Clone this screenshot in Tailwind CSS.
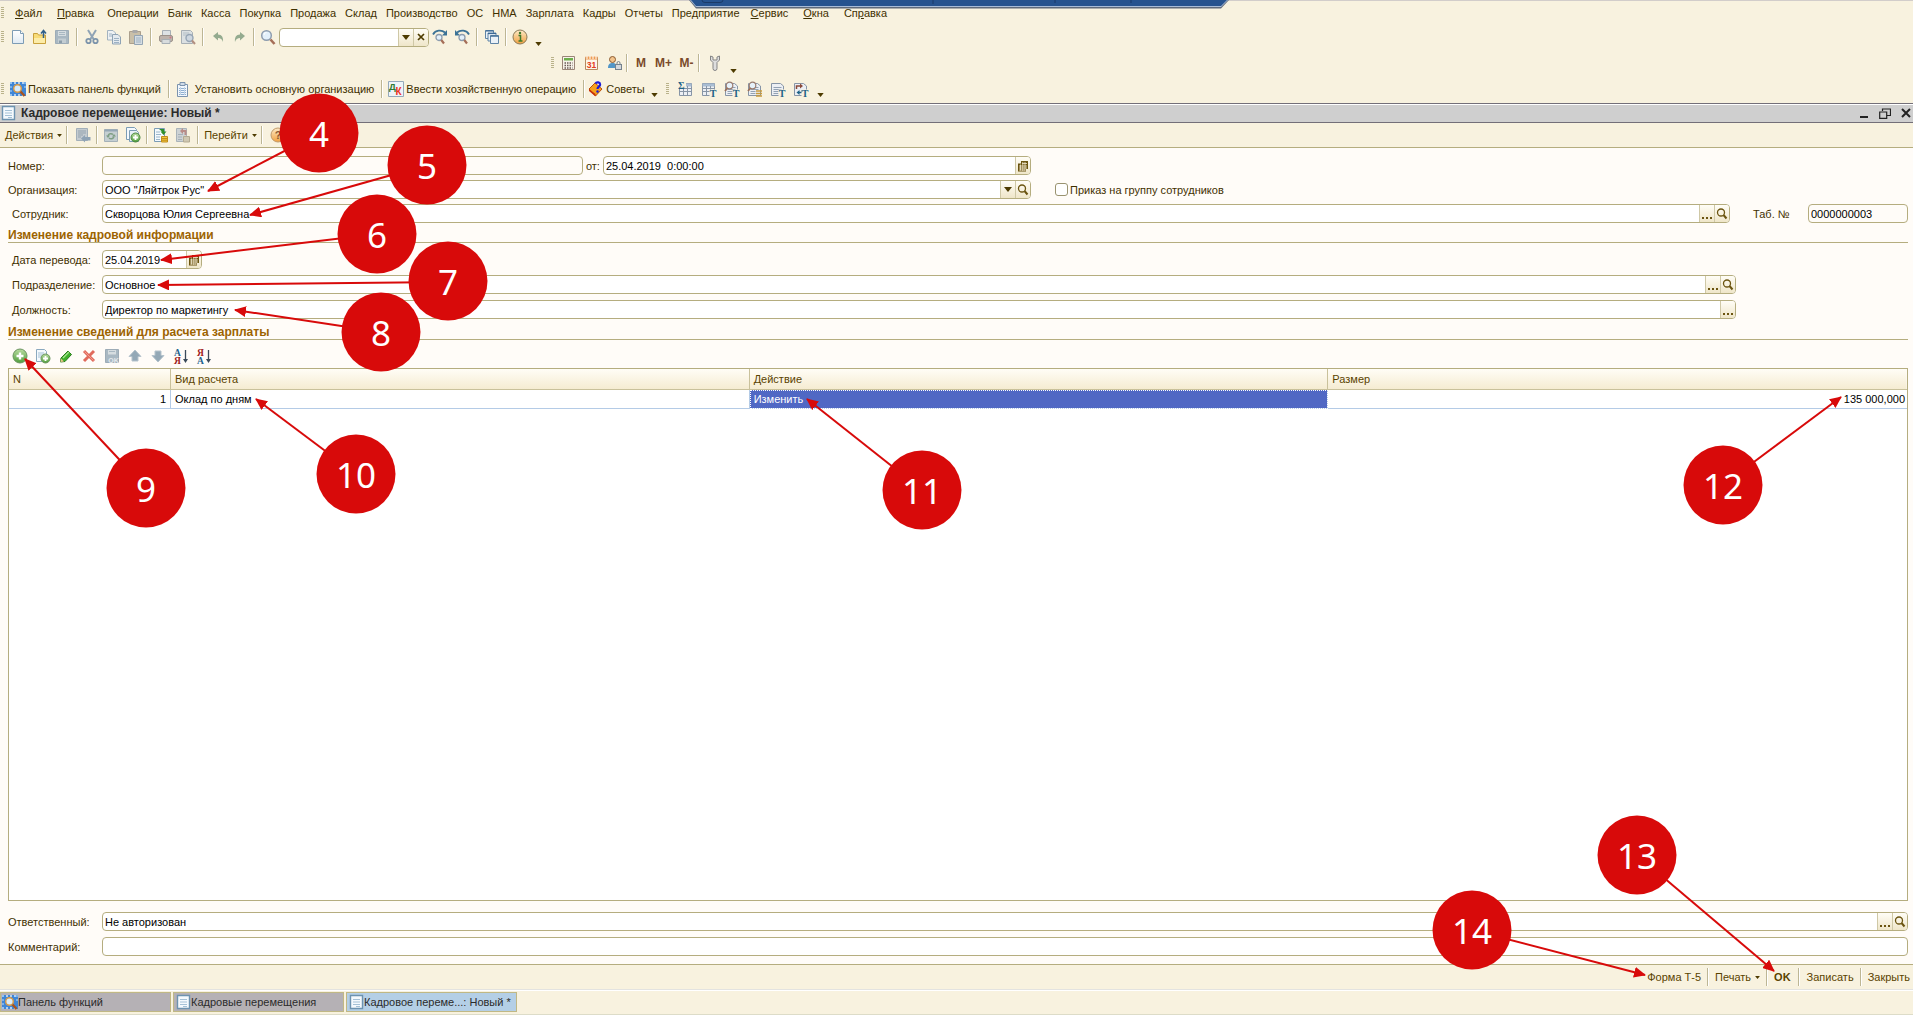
<!DOCTYPE html>
<html lang="ru">
<head>
<meta charset="utf-8">
<meta name="viewport" content="width=device-width, initial-scale=1">
<title>Кадровое перемещение: Новый</title>
<script src="https://cdn.jsdelivr.net/npm/@tailwindcss/browser@4"></script>
</head>
<body class="relative flex min-h-screen flex-col overflow-x-hidden bg-[#f8f2df] font-['Liberation_Sans',Arial,sans-serif] text-[11px] leading-[14px] text-[#3f3000]">

<svg class="absolute size-0" aria-hidden="true">
  <defs>
    <linearGradient id="g-doc" x1="0" y1="0" x2="0" y2="1"><stop offset="0" stop-color="#fff"/><stop offset="1" stop-color="#dfeaf3"/></linearGradient>
    <linearGradient id="g-or" x1="0" y1="0" x2="0" y2="1"><stop offset="0" stop-color="#fdeac8"/><stop offset="1" stop-color="#f0a040"/></linearGradient>
    <linearGradient id="g-gr" x1="0" y1="0" x2="0" y2="1"><stop offset="0" stop-color="#b9dca0"/><stop offset="1" stop-color="#4f9e3c"/></linearGradient>
    <symbol id="i-new" viewBox="0 0 16 16"><path d="M2.5 1.5h8l3 3v10h-11z" fill="url(#g-doc)" stroke="#7d9cb5"/><path d="M10.500 1.500v3h3" fill="#fff" stroke="#7d9cb5"/></symbol>
    <symbol id="i-open" viewBox="0 0 16 16"><path d="M1.500 4.500h4l1 1.500h7v8.500h-12z" fill="#f8dc78" stroke="#c9a13c"/><path d="M2 9h11v5H2z" fill="#fcecA8"/><path d="M11.500 9V2.500M9 4.500l2.500-3 2.500 3" fill="none" stroke="#2f5f8a" stroke-width="1.500"/></symbol>
    <symbol id="i-save" viewBox="0 0 16 16"><path d="M1.500 1.500h13v13h-13z" fill="#a9b8c2" stroke="#9dacb7"/><path d="M4 2h8v5H4z" fill="#d6dde0"/><path d="M4 9.500h8V14H4z" fill="#c3cdd2"/><path d="M5 11.500h3v2.500H5z" fill="#8d9eaa"/><path d="M5 3.500h6M5 5.500h6" stroke="#a9b8c2"/></symbol>
    <symbol id="i-saveok" viewBox="0 0 16 16"><path d="M1.500 1.500h13v13h-13z" fill="#a9b8c2" stroke="#9dacb7"/><path d="M4 2h8v4.500H4z" fill="#d6dde0"/><path d="M5 3.500h6" stroke="#a9b8c2"/><text x="9.500" y="14.500" font-size="7" font-weight="700" text-anchor="middle" fill="#e4e9ec">OK</text></symbol>
    <symbol id="i-cut" viewBox="0 0 16 16"><path d="M4 1l5.500 9M12 1L6.500 10" fill="none" stroke="#8fa3b5" stroke-width="2"/><circle cx="4.500" cy="12" r="2.200" fill="none" stroke="#7c94ab" stroke-width="1.800"/><circle cx="11.500" cy="12" r="2.200" fill="none" stroke="#7c94ab" stroke-width="1.800"/></symbol>
    <symbol id="i-copy" viewBox="0 0 16 16"><path d="M1.500 1.500h5.500l2.500 2.500v7h-8z" fill="#eef1f3" stroke="#a3b3c0"/><path d="M6.500 5.500H12l2.500 2.500v7h-8z" fill="#e4eaef" stroke="#8fa3b5"/><path d="M8 9.500h5M8 11.500h5M8 13.500h5M3 5h3M3 7h3" stroke="#9db2c4"/></symbol>
    <symbol id="i-paste" viewBox="0 0 16 16"><path d="M1.500 2.500h11v12h-11z" fill="#c9bfa8" stroke="#ab9f8c"/><path d="M4.500 1h5v3h-5z" fill="#a9a9a9"/><path d="M6.500 6.500h8v9h-8z" fill="#d6dde2" stroke="#94a5b4"/><path d="M8 9h5M8 11h5M8 13h5" stroke="#9db2c4"/></symbol>
    <symbol id="i-print" viewBox="0 0 16 16"><path d="M4.500 1.500h8v5h-8z" fill="#dde2e4" stroke="#a7afb5"/><rect x="1.500" y="6.500" width="13" height="6" rx="1.500" fill="#bdb3ab" stroke="#9c928a"/><path d="M4 10.500h8v4H4z" fill="#d8dcdd" stroke="#a7afb5"/><circle cx="12.500" cy="8.500" r="1" fill="#c78"/></symbol>
    <symbol id="i-prev" viewBox="0 0 16 16"><path d="M1.500 1.500h9l2 2v11h-11z" fill="#dbe0e2" stroke="#a7afb5"/><path d="M3 4h6M3 6h4" stroke="#b3bec6"/><circle cx="9.500" cy="9" r="3.500" fill="#cdd6df" stroke="#96a5b5" stroke-width="1.400"/><path d="M12 11.500l3 3.500" stroke="#b28f80" stroke-width="2"/></symbol>
    <symbol id="i-undo" viewBox="0 0 16 16"><path d="M3 7l5-4v2.500c4 0 5.500 3 5 7.500C12 10 10.500 9 8 9v2.500z" fill="#94ab8f"/></symbol>
    <symbol id="i-redo" viewBox="0 0 16 16"><path d="M13 7L8 3v2.500c-4 0-5.500 3-5 7.500C4 10 5.500 9 8 9v2.500z" fill="#94ab8f"/></symbol>
    <symbol id="i-mag" viewBox="0 0 16 16"><circle cx="6.500" cy="6.500" r="4.800" fill="#e3f0fa" stroke="#8d9cae" stroke-width="1.500"/><path d="M4 6a2.500 2.500 0 0 1 2.500-2.500" stroke="#fff" fill="none"/><path d="M10.500 10.500l4 4.500" stroke="#a56e58" stroke-width="2.600"/></symbol>
    <symbol id="i-magf" viewBox="0 0 16 16"><path d="M1 5.500C3.500 1 9.500.5 13 3.500" fill="none" stroke="#3b7296" stroke-width="1.800"/><path d="M15 1v5.500h-5z" fill="#3b7296"/><circle cx="7" cy="8.500" r="3" fill="#e3f0fa" stroke="#8d9cae" stroke-width="1.300"/><path d="M9.300 11l2.700 3.500" stroke="#a56e58" stroke-width="2.200"/></symbol>
    <symbol id="i-magb" viewBox="0 0 16 16"><path d="M15 5.500C12.500 1 6.500.5 3 3.500" fill="none" stroke="#3b7296" stroke-width="1.800"/><path d="M1 1v5.500h5z" fill="#3b7296"/><circle cx="8" cy="8.500" r="3" fill="#e3f0fa" stroke="#8d9cae" stroke-width="1.300"/><path d="M10.300 11l2.700 3.500" stroke="#a56e58" stroke-width="2.200"/></symbol>
    <symbol id="i-wins" viewBox="0 0 16 16"><g fill="#eaf1f7" stroke="#5f84a6"><path d="M1.500 1.500h8v8h-8z"/><path d="M4 4h8v8H4z"/><path d="M6.500 6.500h8v8h-8z"/></g><path d="M6.500 7.200h8M4 4.600h8M1.500 2h8" stroke="#31618f"/></symbol>
    <symbol id="i-info" viewBox="0 0 16 16"><circle cx="8" cy="8" r="7" fill="url(#g-or)" stroke="#8c7a55"/><path d="M6.500 6.500H8.500V12M6.500 12h4" stroke="#3f7a2a" stroke-width="1.500" fill="none"/><circle cx="8" cy="4" r="1.200" fill="#3f7a2a"/></symbol>
    <symbol id="i-calc" viewBox="0 0 16 16"><path d="M1.500 1.500h12v13h-12z" fill="#f7f3ea" stroke="#9a8577"/><path d="M3 3h9v2.500H3z" fill="#6cae4c"/><path d="M3.500 8h8M3.500 10.500h8M3.500 13h8" stroke="#6b5a55" stroke-width="1.500" stroke-dasharray="1.500 1"/></symbol>
    <symbol id="i-cal" viewBox="0 0 16 16"><path d="M1.500 2.500h12v12h-12z" fill="#fff6ea" stroke="#b58a62"/><path d="M1.500 1.500h12v3h-12z" fill="#ee9d52"/><path d="M3 1v3M6 1v3M9 1v3M12 1v3" stroke="#fff"/><text x="7.500" y="13" font-size="8.500" font-weight="700" text-anchor="middle" fill="#e23a22">31</text></symbol>
    <symbol id="i-user" viewBox="0 0 16 16"><circle cx="5.500" cy="4.500" r="3" fill="#f3c48c" stroke="#8a5a30"/><path d="M1 13c0-4 2-5 4.500-5S10 9 10 13z" fill="#5296c8"/><rect x="8.500" y="9.500" width="6" height="5" fill="#d4d8dc" stroke="#75828e"/><path d="M10 9.500V8a1.500 1.500 0 0 1 3 0v1.500" fill="none" stroke="#75828e"/></symbol>
    <symbol id="i-wrench" viewBox="0 0 16 16"><path d="M3.500 1v4L6 7.500v6a1.800 1.800 0 0 0 4 0v-6L12.500 5V1L10 2v3H6V2z" fill="#dedede" stroke="#858585"/></symbol>
    <symbol id="i-panel" viewBox="0 0 16 16"><path d="M0 1h16v14H0z" fill="#3f86d6"/><path d="M0 2h16M0 14h16" stroke="#d7e9fa" stroke-dasharray="2 2" stroke-width="1.500"/><path d="M1 1v14M15 1v8" stroke="#8fc0f0" stroke-dasharray="2 2" stroke-width="1.500"/><circle cx="7.500" cy="7.500" r="3.800" fill="#d8ecfb" stroke="#d79a48" stroke-width="1.500"/><path d="M10.500 10.500l4 4.500" stroke="#a8541e" stroke-width="2.400"/></symbol>
    <symbol id="i-org" viewBox="0 0 16 16"><path d="M2.500 3.500h10v12h-10z" fill="#f2f7fc" stroke="#7b93ad"/><path d="M5 1.500h5v3H5z" fill="#cfdbe8" stroke="#7b93ad"/><path d="M4 7.500h7M4 9.500h7M4 11.500h7M4 13.500h7" stroke="#8fb0d2"/><path d="M5.500 6v8M9.500 6v8" stroke="#c3d5e6"/></symbol>
    <symbol id="i-dk" viewBox="0 0 16 16"><path d="M.5.500h15v15H.5z" fill="#eef4f8" stroke="#94a9bb"/><text x="1" y="9" font-size="9.500" font-weight="700" fill="#2e7a30">Д</text><text x="7.500" y="14" font-size="10" font-weight="700" fill="#ee3322">К</text></symbol>
    <symbol id="i-tips" viewBox="0 0 16 16"><path d="M1 8l6-6 7 6-6.500 7z" fill="#f6a11c" stroke="#b8500c"/><path d="M1 8l6.500 5v2.500L1 10z" fill="#c82f0a"/><path d="M7.500 2.500C8.500.500 12.500 1 12 4c-.4 1.800-2.500 1.500-2.500 4" fill="none" stroke="#1b1bd8" stroke-width="2.200"/><circle cx="9.500" cy="10.500" r="1.200" fill="#1b1bd8"/></symbol>
    <symbol id="r-doc" viewBox="0 0 16 16"><path d="M1.500 2.500h9l3 2.500v9.500h-12z" fill="#eceff4" stroke="#8795a6"/><path d="M3.500 6.500h8M3.500 8.500h8M3.500 10.500h5M3.500 12.500h5" stroke="#93a2b4"/></symbol>
    <symbol id="r-grid" viewBox="0 0 16 16"><path d="M1.500 2.500h12v12h-12z" fill="#eceff4" stroke="#8795a6"/><path d="M1.500 4h12" stroke="#a9bdd3" stroke-width="3"/><path d="M2 7.500h11M2 10.500h11M5.500 5v9M9.500 5v9" stroke="#8795a6"/></symbol>
    <symbol id="r-t" viewBox="0 0 16 16"><path d="M8.500 8.500h7v7h-7z" fill="#f8f2df"/><text x="12" y="15.500" font-family="Liberation Serif" font-size="10" font-weight="700" text-anchor="middle" fill="#1d6287">Т</text></symbol>
    <symbol id="r-mag" viewBox="0 0 16 16"><circle cx="5.500" cy="4.500" r="3.300" fill="#e6f1fa" stroke="#9a7c70" stroke-width="1.200"/><path d="M3.500 7L1 10" stroke="#9a6e58" stroke-width="1.800"/></symbol>
    <symbol id="i-doc" viewBox="0 0 16 16"><path d="M2.500 1.500h12v13h-12z" fill="#f4f9fd" stroke="#6d93b0" stroke-width="1.400"/><path d="M5 5.500h7M5 8h7M5 10.500h7M8 12.500h4" stroke="#a5c1d6"/></symbol>
    <symbol id="i-back" viewBox="0 0 16 16"><path d="M1.500 1.500h11v12h-11z" fill="#c4cbd0" stroke="#a2afb9"/><path d="M3 4h8M3 6h8M3 8h5M3 10h3" stroke="#94a3af"/><path d="M6 11.500l4-3.500v2h5.500v3.500H10v2z" fill="#8fa3b5"/></symbol>
    <symbol id="i-refr" viewBox="0 0 16 16"><path d="M1.500 2.500h13v12h-13z" fill="#c5cfd2" stroke="#a4b1b8"/><path d="M1.500 3.500h13" stroke="#94a7b5" stroke-width="2"/><path d="M5 9a3 3 0 0 1 5-1.500M11 9.500a3 3 0 0 1-5 1.500" fill="none" stroke="#7f9f85" stroke-width="1.500"/><path d="M3 8.500h4l-2 2.500zM9 9.500h4L11 7z" fill="#7f9f85"/></symbol>
    <symbol id="i-cpyadd" viewBox="0 0 16 16"><path d="M1.500.5h8l2 2v10h-10z" fill="#f4f9fd" stroke="#7b9cb5"/><path d="M4.500 3.500h7l2 2v9h-9z" fill="#e8f1f8" stroke="#7b9cb5"/><circle cx="10.500" cy="10.500" r="4.500" fill="url(#g-gr)" stroke="#4b8640"/><path d="M10.500 8v5M8 10.500h5" stroke="#fff" stroke-width="1.800"/></symbol>
    <symbol id="i-post" viewBox="0 0 16 16"><path d="M1.500 1.500h10v13h-10z" fill="#f4f9fd" stroke="#7b9cb5"/><path d="M3 5h4M3 7.500h5M3 10h4M3 12.500h4" stroke="#9bb6cb"/><path d="M6 2h5v2.500h2.500L10.500 8 7.500 4.500H9" fill="#2f8f2a"/><path d="M8.500 9.500h6v5.500h-6z" fill="#f3c83c" stroke="#c08c1c"/><path d="M8.500 11.500h6M8.500 13.200h6" stroke="#c08c1c"/></symbol>
    <symbol id="i-unpost" viewBox="0 0 16 16"><path d="M1.500 1.500h10v13h-10z" fill="#cdd2d4" stroke="#a9b3b9"/><path d="M3 7.500h5M3 10h4M3 12.500h4" stroke="#a5b0b8"/><path d="M5 4l3-3v2h3.500v5H9.500V5H8v2z" fill="#b98c88"/><path d="M8.500 9.500h6v5.500h-6z" fill="#cfc8b2" stroke="#b3aa92"/></symbol>
    <symbol id="i-help" viewBox="0 0 16 16"><circle cx="8" cy="8" r="7" fill="url(#g-or)" stroke="#c09a6a"/><text x="8" y="12" font-size="11" font-weight="700" text-anchor="middle" fill="#8a5a30">?</text></symbol>
    <symbol id="i-add" viewBox="0 0 16 16"><circle cx="8" cy="8" r="7" fill="url(#g-gr)" stroke="#6b9460"/><path d="M8 4.500v7M4.500 8h7" stroke="#fff" stroke-width="2.400"/></symbol>
    <symbol id="i-addc" viewBox="0 0 16 16"><path d="M1.500 1.500h8l2 2v10h-10z" fill="#f4f9fd" stroke="#8ba9bf"/><path d="M3 5h6M3 7h6M3 9h3" stroke="#a5c1d6"/><circle cx="10.500" cy="10.500" r="4.500" fill="url(#g-gr)" stroke="#6b9460"/><path d="M10.500 8v5M8 10.500h5" stroke="#fff" stroke-width="1.800"/></symbol>
    <symbol id="i-pen" viewBox="0 0 16 16"><path d="M3 10l7-7 3.500 3.500L7 13.500 2.500 14z" fill="#3fb02c" stroke="#2a7a1c"/><path d="M5 10l6-6" stroke="#a9e690" stroke-width="1.300"/><path d="M2.500 14l.500-3.500 3 3z" fill="#e9c58a"/></symbol>
    <symbol id="i-del" viewBox="0 0 16 16"><path d="M3 3l10 10M13 3L3 13" stroke="#e06a5c" stroke-width="3"/><path d="M3.500 3.500l9 9" stroke="#f39a8c"/></symbol>
    <symbol id="i-up" viewBox="0 0 16 16"><path d="M8 2l6 6.500h-3V13H5V8.500H2z" fill="#93a8b6" stroke="#b5c3cc"/></symbol>
    <symbol id="i-down" viewBox="0 0 16 16"><path d="M8 14l6-6.500h-3V3H5v4.500H2z" fill="#93a8b6" stroke="#b5c3cc"/></symbol>
    <symbol id="i-az" viewBox="0 0 16 16"><g font-family="Liberation Serif" font-size="9.500" font-weight="700"><text x="1" y="7.500" fill="#23638c">А</text><text x="1" y="15.500" fill="#a02020">Я</text></g><path d="M12.500 2v11" stroke="#3a4a5a" stroke-width="1.300"/><path d="M10 11h5l-2.500 4z" fill="#3a4a5a"/></symbol>
    <symbol id="i-za" viewBox="0 0 16 16"><g font-family="Liberation Serif" font-size="9.500" font-weight="700"><text x="1" y="7.500" fill="#a02020">Я</text><text x="1" y="15.500" fill="#23638c">А</text></g><path d="M12.500 2v11" stroke="#3a4a5a" stroke-width="1.300"/><path d="M10 11h5l-2.500 4z" fill="#3a4a5a"/></symbol>
    <symbol id="f-cal" viewBox="0 0 12 12"><path d="M4 1h7v8H9v2.500H1V3.500h3z" fill="#6b5410"/><path d="M2 6h8M2 8h8M2 10h6M5 3.500h5M3.500 4.500v6M5.800 2v9M8 2v9" stroke="#f3ead0" stroke-width=".8"/></symbol>
    <symbol id="f-mag" viewBox="0 0 12 12"><circle cx="5" cy="4.500" r="3.500" fill="none" stroke="#6b5410" stroke-width="1.300"/><path d="M7.500 7l3 3.500" stroke="#6b5410" stroke-width="2"/></symbol>
    <symbol id="f-down" viewBox="0 0 8 5"><path d="M0 0h8L4 5z" fill="#4d3b00"/></symbol>
    <symbol id="f-dots" viewBox="0 0 12 12"><path d="M1 9h2v2H1zM5 9h2v2H5zM9 9h2v2H9z" fill="#6b5410"/></symbol>
  </defs>
</svg>

<!-- remote session tab -->
<svg class="absolute left-[36%] top-0 h-[9px] w-[540px]" viewBox="0 0 540 9" aria-hidden="true">
  <path d="M0 0h540l-8 8.500H7z" fill="#5e6a7c"/><path d="M1 0h538l-7 7H7z" fill="#a8bcd8"/><path d="M2 0h536l-6 6H7z" fill="#26538f"/>
  <path d="M13 0q0 2.500 3 2.500h15q3 0 3-2.500" fill="none" stroke="#1b3b68"/><path d="M244 0v4M366 0v3M442 0v3" stroke="#1b3b68"/>
</svg>

<!-- main menu -->
<nav class="flex h-[26px] items-center border-t border-[#d2cdca] pb-0.5 pl-px">
  <span class="mr-[11px] h-3 w-[3px] bg-[repeating-linear-gradient(#b9b28a_0_1px,transparent_1px_2px)]"></span>
  <div class="flex items-center gap-[9px] whitespace-nowrap">
    <button class="mr-1.5"><u>Ф</u>айл</button><button class="mr-1"><u>П</u>равка</button><button>Операции</button><button>Банк</button><button>Касса</button><button>Покупка</button><button>Продажа</button><button>Склад</button><button>Производство</button><button>ОС</button><button>НМА</button><button>Зарплата</button><button>Кадры</button><button>Отчеты</button><button class="mr-0.5">Предприятие</button><button class="mr-1.5"><u>С</u>ервис</button><button class="mr-1.5"><u>О</u>кна</button><button>Сп<u>р</u>авка</button>
  </div>
</nav>

<!-- standard toolbar -->
<div class="flex h-[22px] items-center pl-px">
  <span class="mr-[3px] h-3 w-[3px] bg-[repeating-linear-gradient(#b9b28a_0_1px,transparent_1px_2px)]"></span>
  <button class="flex w-[22px] justify-center" aria-label="Новый"><svg class="size-4"><use href="#i-new"/></svg></button>
  <button class="flex w-[22px] justify-center" aria-label="Открыть"><svg class="size-4"><use href="#i-open"/></svg></button>
  <button class="flex w-[22px] justify-center" aria-label="Сохранить"><svg class="size-4"><use href="#i-save"/></svg></button>
  <span class="mx-[3px] h-[18px] w-0.5 border-r border-white bg-[#bdb694]"></span>
  <button class="flex w-[22px] justify-center" aria-label="Вырезать"><svg class="size-4"><use href="#i-cut"/></svg></button>
  <button class="flex w-[22px] justify-center" aria-label="Копировать"><svg class="size-4"><use href="#i-copy"/></svg></button>
  <button class="flex w-[22px] justify-center" aria-label="Вставить"><svg class="size-4"><use href="#i-paste"/></svg></button>
  <span class="mx-[3px] h-[18px] w-0.5 border-r border-white bg-[#bdb694]"></span>
  <button class="flex w-[22px] justify-center" aria-label="Печать"><svg class="size-4"><use href="#i-print"/></svg></button>
  <button class="flex w-[22px] justify-center" aria-label="Просмотр"><svg class="size-4"><use href="#i-prev"/></svg></button>
  <span class="mx-[3px] h-[18px] w-0.5 border-r border-white bg-[#bdb694]"></span>
  <button class="flex w-[22px] justify-center" aria-label="Отменить"><svg class="size-4"><use href="#i-undo"/></svg></button>
  <button class="flex w-[22px] justify-center" aria-label="Повторить"><svg class="size-4"><use href="#i-redo"/></svg></button>
  <span class="mx-0.5 h-[18px] w-0.5 border-r border-white bg-[#bdb694]"></span>
  <button class="flex w-[22px] justify-center" aria-label="Найти"><svg class="size-4"><use href="#i-mag"/></svg></button>
  <div class="flex h-[19px] w-[150px] overflow-hidden rounded-[4px] border border-[#b5ad7f] bg-white">
    <input class="min-w-0 flex-1 px-0.5 outline-none" aria-label="Строка поиска">
    <button class="flex w-[15px] items-center justify-center border-l border-[#cfc8a6] bg-linear-to-b from-[#fffdf6] to-[#efe6c9]" aria-label="Список"><svg class="h-[5px] w-2"><use href="#f-down"/></svg></button>
    <button class="flex w-[15px] items-center justify-center border-l border-[#cfc8a6] bg-linear-to-b from-[#fffdf6] to-[#efe6c9]" aria-label="Очистить"><svg class="size-2" viewBox="0 0 8 8"><path d="M1 1l6 6M7 1L1 7" stroke="#4d3b00" stroke-width="1.700"/></svg></button>
  </div>
  <button class="flex w-[22px] justify-center" aria-label="Найти далее"><svg class="size-4"><use href="#i-magf"/></svg></button>
  <button class="flex w-[22px] justify-center" aria-label="Найти ранее"><svg class="size-4"><use href="#i-magb"/></svg></button>
  <span class="mx-[3px] h-[18px] w-0.5 border-r border-white bg-[#bdb694]"></span>
  <button class="flex w-[22px] justify-center" aria-label="Окна"><svg class="size-4"><use href="#i-wins"/></svg></button>
  <span class="mx-0.5 h-[18px] w-0.5 border-r border-white bg-[#bdb694]"></span>
  <button class="flex w-[22px] justify-center" aria-label="Справка"><svg class="size-4"><use href="#i-info"/></svg></button>
  <button class="ml-1 self-end pb-0.5" aria-label="Ещё"><svg class="h-1 w-[7px]"><use href="#f-down"/></svg></button>
</div>

<!-- calculator toolbar -->
<div class="flex h-[29px] items-center pl-[551px]">
  <span class="mr-[3px] h-3 w-[3px] bg-[repeating-linear-gradient(#b9b28a_0_1px,transparent_1px_2px)]"></span>
  <button class="flex w-[23px] justify-center" aria-label="Калькулятор"><svg class="size-4"><use href="#i-calc"/></svg></button>
  <button class="flex w-[23px] justify-center" aria-label="Календарь"><svg class="size-4"><use href="#i-cal"/></svg></button>
  <button class="flex w-[23px] justify-center" aria-label="Пользователь"><svg class="size-4"><use href="#i-user"/></svg></button>
  <span class="mr-0.5 h-[18px] w-0.5 border-r border-white bg-[#bdb694]"></span>
  <button class="w-[22px] text-[12px] font-bold text-[#7a4a2a]">M</button>
  <button class="w-[23px] text-[12px] font-bold text-[#7a4a2a]">M+</button>
  <button class="w-[23px] text-[12px] font-bold text-[#7a4a2a]">M-</button>
  <span class="mr-1 h-[18px] w-0.5 border-r border-white bg-[#bdb694]"></span>
  <button class="flex w-[22px] justify-center" aria-label="Настройка"><svg class="size-4"><use href="#i-wrench"/></svg></button>
  <button class="ml-1 self-end pb-1" aria-label="Ещё"><svg class="h-1 w-[7px]"><use href="#f-down"/></svg></button>
</div>

<!-- functions toolbar -->
<div class="flex h-[26px] items-center whitespace-nowrap pb-0.5 pl-px">
  <span class="mr-[6px] h-3 w-[3px] bg-[repeating-linear-gradient(#b9b28a_0_1px,transparent_1px_2px)]"></span>
  <button class="flex items-center gap-0.5 pr-1"><svg class="size-4"><use href="#i-panel"/></svg>Показать панель функций</button>
  <span class="mx-[3px] h-[18px] w-0.5 border-r border-white bg-[#bdb694]"></span>
  <button class="flex items-center gap-1 pl-0.5 pr-1"><svg class="size-4"><use href="#i-org"/></svg>Установить основную организацию</button>
  <span class="mx-[3px] h-[18px] w-0.5 border-r border-white bg-[#bdb694]"></span>
  <button class="flex items-center gap-0.5 pl-0.5 pr-1"><svg class="size-4"><use href="#i-dk"/></svg>Ввести хозяйственную операцию</button>
  <span class="mx-[3px] h-[18px] w-0.5 border-r border-white bg-[#bdb694]"></span>
  <button class="flex items-center gap-0.5 pr-0.5"><svg class="size-4"><use href="#i-tips"/></svg>Советы</button>
  <button class="ml-1 self-end pb-1" aria-label="Ещё"><svg class="h-1 w-[7px]"><use href="#f-down"/></svg></button>
  <span class="ml-2 mr-1.5 h-3 w-[3px] bg-[repeating-linear-gradient(#b9b28a_0_1px,transparent_1px_2px)]"></span>
  <button class="flex w-[23px] justify-center" aria-label="Отчёт по итогам"><svg class="size-4"><use href="#r-grid"/><path d="M0 0h8v7H0z" fill="#f8f2df"/><text x="0" y="7.500" font-family="Liberation Serif" font-size="10" font-weight="700" fill="#1d6287">Σ</text></svg></button>
  <button class="flex w-[23px] justify-center" aria-label="Таблица"><svg class="size-4"><use href="#r-grid"/><use href="#r-t"/></svg></button>
  <button class="flex w-[23px] justify-center" aria-label="Анализ"><svg class="size-4"><use href="#r-doc"/><use href="#r-mag"/><use href="#r-t"/></svg></button>
  <button class="flex w-[23px] justify-center" aria-label="Карточка"><svg class="size-4"><use href="#r-doc"/><use href="#r-mag"/><path d="M9 10h6M9 12.500h6M9 15h6" stroke="#c79a3c" stroke-width="1.500"/></svg></button>
  <button class="flex w-[23px] justify-center" aria-label="Документ"><svg class="size-4"><use href="#r-doc"/><use href="#r-t"/></svg></button>
  <button class="flex w-[23px] justify-center" aria-label="Обороты"><svg class="size-4"><path d="M1.500 2.500h9l3 2.500v9.500h-12z" fill="#eceff4" stroke="#8795a6"/><path d="M3.500 8V5h4" fill="none" stroke="#8a4a3a" stroke-width="1.500"/><path d="M7 2.500L10 5 7 7.500z" fill="#8a4a3a"/><path d="M9 9v2.500H6" fill="none" stroke="#1d6287" stroke-width="1.500"/><path d="M6.500 9L3.500 11.500l3 2.500z" fill="#1d6287"/><use href="#r-t"/></svg></button>
  <button class="ml-1 self-end pb-1" aria-label="Ещё"><svg class="h-1 w-[7px]"><use href="#f-down"/></svg></button>
</div>

<!-- document window title -->
<header class="flex h-5 items-center border-y border-[#736f78] bg-[#cfcfcf] pr-0.5 text-[#2b2b2b] shadow-[inset_0_1px_#ffffff]">
  <svg class="size-4"><use href="#i-doc"/></svg>
  <h1 class="flex-1 pl-[5px] text-[12px] font-bold">Кадровое перемещение: Новый *</h1>
  <div class="flex items-center gap-[10px]">
    <button aria-label="Свернуть"><svg class="size-[10px]" viewBox="0 0 10 10"><path d="M1 9h8" stroke="#222" stroke-width="2"/></svg></button>
    <button aria-label="Восстановить"><svg class="h-[11px] w-3" viewBox="0 0 12 11"><path d="M3.500 3V1h8v6.500H8" fill="none" stroke="#222" stroke-width="1.200"/><path d="M.7 4h7v6.300h-7z" fill="none" stroke="#222" stroke-width="1.200"/></svg></button>
    <button aria-label="Закрыть"><svg class="size-[10px]" viewBox="0 0 10 10"><path d="M1 1l8 8M9 1L1 9" stroke="#222" stroke-width="2"/></svg></button>
  </div>
</header>

<!-- document toolbar -->
<div class="flex h-[25px] items-center border-b border-[#b5ad7f] pl-[5px] text-[#5a4300]">
  <button class="flex items-center gap-1">Действия<svg class="h-[3px] w-[5px]"><use href="#f-down"/></svg></button>
  <span class="mx-1 h-[18px] w-0.5 border-r border-white bg-[#bdb694]"></span>
  <button class="flex w-[22px] justify-center" aria-label="Закрыть и записать"><svg class="size-4"><use href="#i-back"/></svg></button>
  <span class="mx-0.5 h-[18px] w-0.5 border-r border-white bg-[#bdb694]"></span>
  <button class="flex w-[22px] justify-center" aria-label="Обновить"><svg class="size-4"><use href="#i-refr"/></svg></button>
  <button class="flex w-[22px] justify-center" aria-label="Скопировать документ"><svg class="size-4"><use href="#i-cpyadd"/></svg></button>
  <span class="mx-0.5 h-[18px] w-0.5 border-r border-white bg-[#bdb694]"></span>
  <button class="flex w-[22px] justify-center" aria-label="Провести"><svg class="size-4"><use href="#i-post"/></svg></button>
  <button class="flex w-[22px] justify-center" aria-label="Отмена проведения"><svg class="size-4"><use href="#i-unpost"/></svg></button>
  <span class="mx-[3px] h-[18px] w-0.5 border-r border-white bg-[#bdb694]"></span>
  <button class="flex items-center gap-1 pl-0.5">Перейти<svg class="h-[3px] w-[5px]"><use href="#f-down"/></svg></button>
  <span class="mx-1 h-[18px] w-0.5 border-r border-white bg-[#bdb694]"></span>
  <button class="flex w-[22px] justify-center" aria-label="Помощь"><svg class="size-4"><use href="#i-help"/></svg></button>
</div>

<!-- form -->
<main class="flex flex-1 flex-col bg-[#fffcf8] pb-2 pl-2 pr-[5px] pt-2">
  <div class="grid grid-cols-[1023fr_877fr] gap-y-[5px]">
    <div class="flex items-center">
      <label for="num" class="w-[94px] shrink-0">Номер:</label>
      <div class="flex h-[19px] flex-[481] rounded-[4px] border border-[#b5ad7f]"><input id="num" class="min-w-0 flex-1 px-0.5 text-black outline-none"></div>
      <label for="dt" class="w-5 text-center">от:</label>
      <div class="flex h-[19px] flex-[428] overflow-hidden rounded-[4px] border border-[#b5ad7f] bg-white">
        <input id="dt" class="min-w-0 flex-1 whitespace-pre px-0.5 text-black outline-none" value="25.04.2019  0:00:00">
        <button class="flex w-[15px] items-center justify-center border-l border-[#cfc8a6] bg-linear-to-b from-[#fffdf6] to-[#efe6c9]" aria-label="Календарь"><svg class="size-3"><use href="#f-cal"/></svg></button>
      </div>
    </div>
    <div></div>
    <div class="flex items-center">
      <label for="org" class="w-[94px] shrink-0">Организация:</label>
      <div class="flex h-[19px] flex-1 overflow-hidden rounded-[4px] border border-[#b5ad7f] bg-white">
        <input id="org" class="min-w-0 flex-1 px-0.5 text-black outline-none" value='ООО "Ляйтрок Рус"'>
        <button class="flex w-[15px] items-center justify-center border-l border-[#cfc8a6] bg-linear-to-b from-[#fffdf6] to-[#efe6c9]" aria-label="Список"><svg class="h-[5px] w-2"><use href="#f-down"/></svg></button>
        <button class="flex w-[15px] items-center justify-center border-l border-[#cfc8a6] bg-linear-to-b from-[#fffdf6] to-[#efe6c9]" aria-label="Открыть"><svg class="size-3"><use href="#f-mag"/></svg></button>
      </div>
    </div>
    <label class="flex items-center gap-0.5 pl-6"><input type="checkbox" class="size-[13px] appearance-none rounded-[3px] border border-[#9a9370] bg-white">Приказ на группу сотрудников</label>
  </div>
  <div class="mt-[5px] flex items-center">
    <label for="emp" class="w-[94px] shrink-0 pl-1">Сотрудник:</label>
    <div class="flex h-[19px] flex-1 overflow-hidden rounded-[4px] border border-[#b5ad7f] bg-white">
      <input id="emp" class="min-w-0 flex-1 px-0.5 text-black outline-none" value="Скворцова Юлия Сергеевна">
      <button class="flex w-[15px] items-center justify-center border-l border-[#cfc8a6] bg-linear-to-b from-[#fffdf6] to-[#efe6c9]" aria-label="Выбрать"><svg class="size-3"><use href="#f-dots"/></svg></button>
      <button class="flex w-[15px] items-center justify-center border-l border-[#cfc8a6] bg-linear-to-b from-[#fffdf6] to-[#efe6c9]" aria-label="Открыть"><svg class="size-3"><use href="#f-mag"/></svg></button>
    </div>
    <label for="tab" class="w-[78px] pl-[23px]">Таб. №</label>
    <div class="flex h-[19px] w-[100px] rounded-[4px] border border-[#b5ad7f]"><input id="tab" class="min-w-0 flex-1 px-0.5 text-black outline-none" value="0000000003"></div>
  </div>

  <h2 class="flex h-5 items-end border-b border-[#b5ad7f] text-[12px] font-bold text-[#9c6300]">Изменение кадровой информации</h2>
  <div class="mt-[7px] flex flex-col gap-[6px] pr-[172px]">
    <div class="flex items-center">
      <label for="mv" class="w-[94px] shrink-0 pl-1">Дата перевода:</label>
      <div class="flex h-[19px] w-[100px] overflow-hidden rounded-[4px] border border-[#b5ad7f] bg-white">
        <input id="mv" class="min-w-0 flex-1 px-0.5 text-black outline-none" value="25.04.2019">
        <button class="flex w-[15px] items-center justify-center border-l border-[#cfc8a6] bg-linear-to-b from-[#fffdf6] to-[#efe6c9]" aria-label="Календарь"><svg class="size-3"><use href="#f-cal"/></svg></button>
      </div>
    </div>
    <div class="flex items-center">
      <label for="dep" class="w-[94px] shrink-0 whitespace-nowrap pl-1">Подразделение:</label>
      <div class="flex h-[19px] flex-1 overflow-hidden rounded-[4px] border border-[#b5ad7f] bg-white">
        <input id="dep" class="min-w-0 flex-1 px-0.5 text-black outline-none" value="Основное">
        <button class="flex w-[15px] items-center justify-center border-l border-[#cfc8a6] bg-linear-to-b from-[#fffdf6] to-[#efe6c9]" aria-label="Выбрать"><svg class="size-3"><use href="#f-dots"/></svg></button>
        <button class="flex w-[15px] items-center justify-center border-l border-[#cfc8a6] bg-linear-to-b from-[#fffdf6] to-[#efe6c9]" aria-label="Открыть"><svg class="size-3"><use href="#f-mag"/></svg></button>
      </div>
    </div>
    <div class="flex items-center">
      <label for="pos" class="w-[94px] shrink-0 pl-1">Должность:</label>
      <div class="flex h-[19px] flex-1 overflow-hidden rounded-[4px] border border-[#b5ad7f] bg-white">
        <input id="pos" class="min-w-0 flex-1 px-0.5 text-black outline-none" value="Директор по маркетингу">
        <button class="flex w-[15px] items-center justify-center border-l border-[#cfc8a6] bg-linear-to-b from-[#fffdf6] to-[#efe6c9]" aria-label="Выбрать"><svg class="size-3"><use href="#f-dots"/></svg></button>
      </div>
    </div>
  </div>

  <h2 class="flex h-[21px] items-end border-b border-[#b5ad7f] text-[12px] font-bold text-[#9c6300]">Изменение сведений для расчета зарплаты</h2>
  <div class="flex h-7 items-center pt-1">
    <button class="flex w-[23px] justify-center" aria-label="Добавить"><svg class="size-4"><use href="#i-add"/></svg></button>
    <button class="flex w-[23px] justify-center" aria-label="Добавить копированием"><svg class="size-4"><use href="#i-addc"/></svg></button>
    <button class="flex w-[23px] justify-center" aria-label="Изменить"><svg class="size-4"><use href="#i-pen"/></svg></button>
    <button class="flex w-[23px] justify-center" aria-label="Удалить"><svg class="size-4"><use href="#i-del"/></svg></button>
    <button class="flex w-[23px] justify-center" aria-label="Записать строку"><svg class="size-4"><use href="#i-saveok"/></svg></button>
    <button class="flex w-[23px] justify-center" aria-label="Вверх"><svg class="size-4"><use href="#i-up"/></svg></button>
    <button class="flex w-[23px] justify-center" aria-label="Вниз"><svg class="size-4"><use href="#i-down"/></svg></button>
    <button class="flex w-[23px] justify-center" aria-label="По возрастанию"><svg class="size-4"><use href="#i-az"/></svg></button>
    <button class="flex w-[23px] justify-center" aria-label="По убыванию"><svg class="size-4"><use href="#i-za"/></svg></button>
  </div>

  <div class="flex-1 border border-[#b5ad7f] bg-white">
    <table class="w-full table-fixed border-separate border-spacing-0">
      <colgroup><col class="w-[162px]"><col><col><col></colgroup>
      <thead>
        <tr class="h-[21px] bg-linear-to-b from-[#fffdf6] to-[#f5ebd0] text-left text-[#5a4300]">
          <th class="border-b border-r border-[#c9c19b] pl-1 font-normal">N</th>
          <th class="border-b border-r border-[#c9c19b] pl-1 font-normal">Вид расчета</th>
          <th class="border-b border-r border-[#c9c19b] pl-1 font-normal">Действие</th>
          <th class="border-b border-[#c9c19b] pl-1 font-normal">Размер</th>
        </tr>
      </thead>
      <tbody>
        <tr class="h-[19px] text-black">
          <td class="border-b border-r border-[#b4cbe6] pr-1 text-right">1</td>
          <td class="border-b border-r border-[#b4cbe6] pl-1">Оклад по дням</td>
          <td class="border-b border-r border-[#b4cbe6] bg-[#5068c4] pl-1 text-white outline-1 -outline-offset-1 outline-dotted outline-white">Изменить</td>
          <td class="border-b border-[#b4cbe6] pr-0.5 text-right">135 000,000</td>
        </tr>
      </tbody>
    </table>
  </div>

  <div class="mt-[11px] flex items-center">
    <label for="resp" class="w-[94px] shrink-0">Ответственный:</label>
    <div class="flex h-[19px] flex-1 overflow-hidden rounded-[4px] border border-[#b5ad7f] bg-white">
      <input id="resp" class="min-w-0 flex-1 px-0.5 text-black outline-none" value="Не авторизован">
      <button class="flex w-[15px] items-center justify-center border-l border-[#cfc8a6] bg-linear-to-b from-[#fffdf6] to-[#efe6c9]" aria-label="Выбрать"><svg class="size-3"><use href="#f-dots"/></svg></button>
      <button class="flex w-[15px] items-center justify-center border-l border-[#cfc8a6] bg-linear-to-b from-[#fffdf6] to-[#efe6c9]" aria-label="Открыть"><svg class="size-3"><use href="#f-mag"/></svg></button>
    </div>
  </div>
  <div class="mt-[6px] flex items-center">
    <label for="com" class="w-[94px] shrink-0">Комментарий:</label>
    <div class="flex h-[19px] flex-1 rounded-[4px] border border-[#b5ad7f] bg-white"><input id="com" class="min-w-0 flex-1 px-0.5 text-black outline-none"></div>
  </div>
</main>

<!-- command bar -->
<footer class="flex h-[25px] items-center justify-end border-t border-[#b5ad7f] pr-[3px] text-[#5a4300]">
  <button>Форма Т-5</button>
  <span class="mx-1.5 h-[18px] w-0.5 border-r border-white bg-[#bdb694]"></span>
  <button class="flex items-center gap-1">Печать<svg class="h-[3px] w-[5px]"><use href="#f-down"/></svg></button>
  <span class="mx-1.5 h-[18px] w-0.5 border-r border-white bg-[#bdb694]"></span>
  <button class="font-bold">OK</button>
  <span class="mx-[7px] h-[18px] w-0.5 border-r border-white bg-[#bdb694]"></span>
  <button>Записать</button>
  <span class="mx-1.5 h-[18px] w-0.5 border-r border-white bg-[#bdb694]"></span>
  <button>Закрыть</button>
</footer>

<!-- open windows -->
<nav class="flex h-[26px] gap-0.5 border-b border-[#dddcc8] bg-[#f8f2df] pt-[3px] pb-0.5 text-[#2b2b2b] shadow-[inset_0_1px_#e3e3e0,inset_0_2px_#ffffff]">
  <button class="flex w-[171px] items-center border border-[#c0b885] bg-[#b5b1b5] pl-px"><svg class="size-4"><use href="#i-panel"/></svg>Панель функций</button>
  <button class="flex w-[171px] items-center border border-[#c0b885] bg-[#b5b1b5] pl-px"><svg class="size-4"><use href="#i-doc"/></svg>Кадровые перемещения</button>
  <button class="flex w-[171px] items-center border border-[#c0b885] bg-[#b4cfe6] pl-px"><svg class="size-4"><use href="#i-doc"/></svg>Кадровое переме...: Новый *</button>
</nav>

<!-- numbered callouts -->
<svg class="pointer-events-none absolute left-0 top-0 h-[1015px] w-[1913px]" viewBox="0 0 1913 1015">
  <defs><marker id="tip" viewBox="0 0 12 11" refX="11" refY="5.500" markerWidth="12" markerHeight="11" markerUnits="userSpaceOnUse" orient="auto"><path d="M0 0l12 5.500L0 11z" fill="#d80a0a"/></marker></defs>
  <g stroke="#d80a0a" stroke-width="2">
    <path d="M319 133L208 191" marker-end="url(#tip)"/><path d="M427 165L250 215" marker-end="url(#tip)"/><path d="M377 234L161 260" marker-end="url(#tip)"/><path d="M448 282L158 285" marker-end="url(#tip)"/><path d="M381 332L235 310" marker-end="url(#tip)"/><path d="M146 488L25 359" marker-end="url(#tip)"/><path d="M356 474L256 399" marker-end="url(#tip)"/><path d="M922 490L807 399" marker-end="url(#tip)"/><path d="M1723 485L1841 397" marker-end="url(#tip)"/><path d="M1637 855L1774 971" marker-end="url(#tip)"/><path d="M1472 930L1645 975" marker-end="url(#tip)"/>
  </g>
  <g fill="#d80a0a"><circle cx="319" cy="133" r="39.500"/><circle cx="427" cy="165" r="39.500"/><circle cx="377" cy="234" r="39.500"/><circle cx="448" cy="281" r="39.500"/><circle cx="381" cy="332" r="39.500"/><circle cx="146" cy="488" r="39.500"/><circle cx="356" cy="474" r="39.500"/><circle cx="922" cy="490" r="39.500"/><circle cx="1723" cy="485" r="39.500"/><circle cx="1637" cy="855" r="39.500"/><circle cx="1472" cy="930" r="39.500"/></g>
  <g class="font-['Noto_Sans',sans-serif] text-[35px]" fill="#fff" text-anchor="middle"><text x="319" y="147">4</text><text x="427" y="179">5</text><text x="377" y="248">6</text><text x="448" y="295">7</text><text x="381" y="346">8</text><text x="146" y="502">9</text><text x="356" y="488">10</text><text x="922" y="504">11</text><text x="1723" y="499">12</text><text x="1637" y="869">13</text><text x="1472" y="944">14</text></g>
</svg>
</body>
</html>
